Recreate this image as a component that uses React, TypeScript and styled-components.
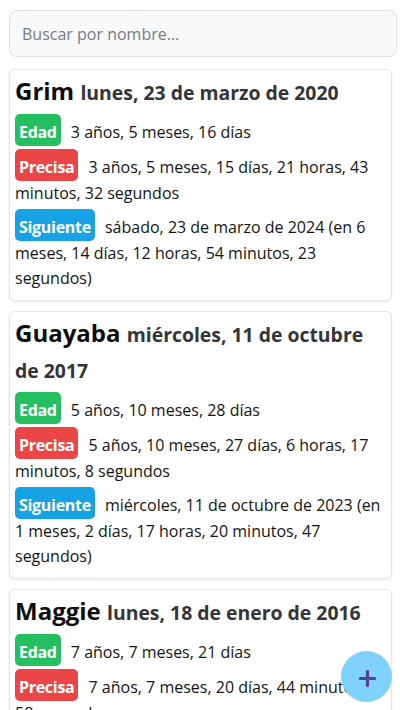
import React from "react";
import styled, { createGlobalStyle } from "styled-components";

const GlobalStyle = createGlobalStyle`
  * { box-sizing: border-box; }
  html, body { margin: 0; padding: 0; background: #ffffff; }
  body {
    font-family: "Open Sans", "Noto Sans", sans-serif;
    color: #111111;
    font-size: 16px;
  }
`;

const Page = styled.div`
  display: flex;
  flex-direction: column;
  gap: 10px;
  padding: 10px 8px 20px 9px;
`;

const Search = styled.input`
  display: block;
  width: calc(100% + 5px);
  height: 47px;
  margin: 0 0 2px 0;
  padding: 0 12px;
  border: 1px solid #dcdfe4;
  border-radius: 8px;
  background: #f8f9fb;
  font-family: "Open Sans", "Noto Sans", sans-serif;
  font-size: 16px;
  color: #212529;
  outline: none;
  &::placeholder { color: #767c83; }
`;

const Card = styled.section`
  display: flex;
  flex-direction: column;
  gap: 3px;
  padding: 3px 6px 9px 5px;
  border: 1px solid #e3e5e8;
  border-radius: 6px;
  background: #ffffff;
  box-shadow: 0 1px 3px rgba(0, 0, 0, 0.08);
`;

const Title = styled.h2`
  margin: 0 0 2.5px 0;
  font-size: 24px;
  line-height: 35.5px;
  font-weight: 700;
  color: #0d0d0d;
`;

const DateText = styled.span`
  font-size: 19.4px;
  line-height: 1;
  font-weight: 700;
  color: #333538;
`;

const Row = styled.p`
  margin: 0;
  font-size: 16px;
  line-height: 25px;
  color: #141414;
`;

const Badge = styled.span<{ $tone: "green" | "red" | "blue" }>`
  display: inline-block;
  padding: 6px 4px 2px 4px;
  margin-right: 6px;
  border-radius: 5px;
  font-size: 16px;
  letter-spacing: -0.3px;
  line-height: 24px;
  font-weight: 700;
  color: #ffffff;
  background: ${(p) =>
    p.$tone === "green" ? "#24bf5f" : p.$tone === "red" ? "#ec4545" : "#17a2e6"};
`;

const Fab = styled.button`
  position: fixed;
  right: 8px;
  bottom: 8px;
  width: 51px;
  height: 51px;
  border: none;
  border-radius: 50%;
  background: #7fd2fb;
  display: flex;
  align-items: center;
  justify-content: center;
  padding: 4px 0 0 1px;
  cursor: pointer;
`;

type Pet = {
  name: string;
  date: string;
  edad: string;
  precisa: string;
  siguiente: string;
};

const pets: Pet[] = [
  {
    name: "Grim",
    date: "lunes, 23 de marzo de 2020",
    edad: "3 años, 5 meses, 16 días",
    precisa: "3 años, 5 meses, 15 días, 21 horas, 43 minutos, 32 segundos",
    siguiente:
      "sábado, 23 de marzo de 2024 (en 6 meses, 14 días, 12 horas, 54 minutos, 23 segundos)",
  },
  {
    name: "Guayaba",
    date: "miércoles, 11 de octubre de 2017",
    edad: "5 años, 10 meses, 28 días",
    precisa: "5 años, 10 meses, 27 días, 6 horas, 17 minutos, 8 segundos",
    siguiente:
      "miércoles, 11 de octubre de 2023 (en 1 meses, 2 días, 17 horas, 20 minutos, 47 segundos)",
  },
  {
    name: "Maggie",
    date: "lunes, 18 de enero de 2016",
    edad: "7 años, 7 meses, 21 días",
    precisa: "7 años, 7 meses, 20 días, 44 minutos, 58 segundos",
    siguiente:
      "jueves, 18 de enero de 2024 (en 4 meses, 9 días, 23 horas, 15 minutos, 2 segundos)",
  },
];

export default function App() {
  return (
    <>
      <GlobalStyle />
      <Page>
        <Search placeholder="Buscar por nombre..." />
        {pets.map((p) => (
          <Card key={p.name}>
            <Title>
              {p.name} <DateText>{p.date}</DateText>
            </Title>
            <Row>
              <Badge $tone="green">Edad</Badge> {p.edad}
            </Row>
            <Row>
              <Badge $tone="red">Precisa</Badge> {p.precisa}
            </Row>
            <Row>
              <Badge $tone="blue">Siguiente</Badge> {p.siguiente}
            </Row>
          </Card>
        ))}
      </Page>
      <Fab aria-label="Agregar">
        <svg width="17" height="17" viewBox="0 0 17 17">
          <path
            d="M8.5 1.5v14M1.5 8.5h14"
            stroke="#5a4489"
            strokeWidth="3.2"
            strokeLinecap="round"
          />
        </svg>
      </Fab>
    </>
  );
}
